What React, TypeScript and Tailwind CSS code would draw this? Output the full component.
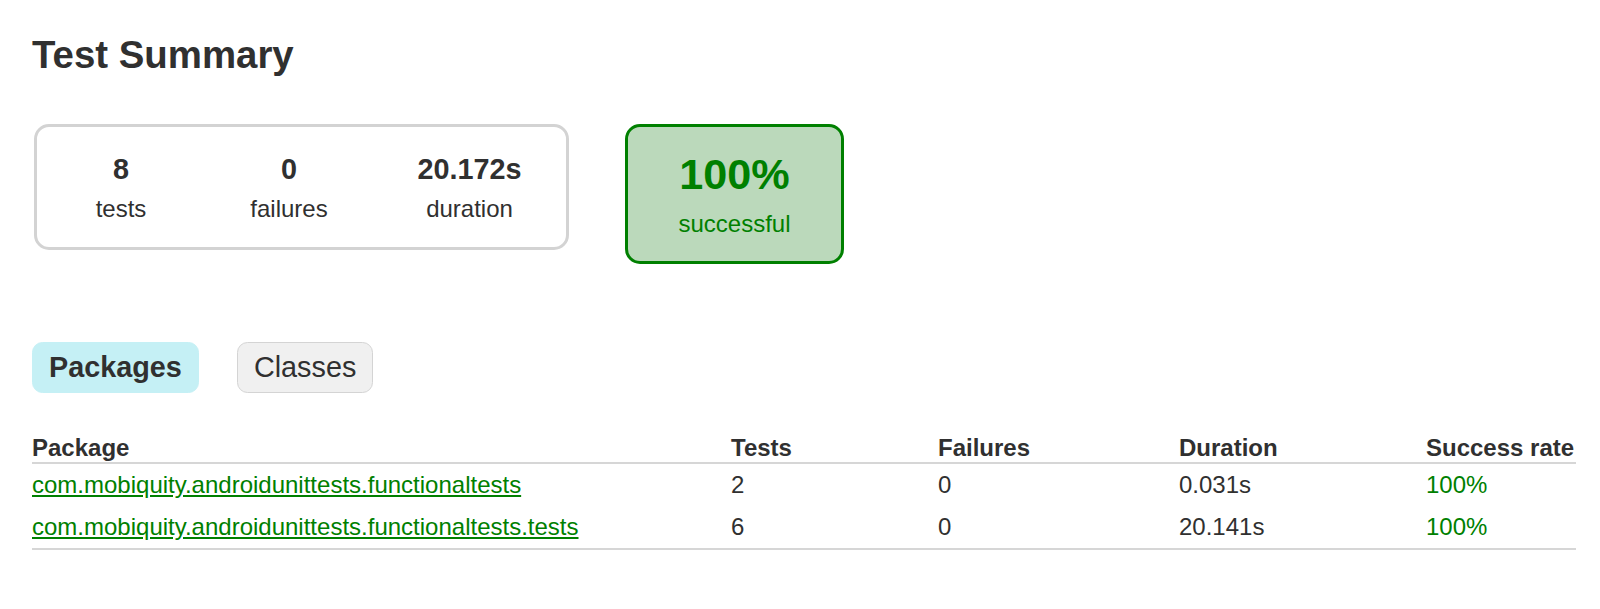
import React from "react";

const rows = [
  { name: "com.mobiquity.androidunittests.functionaltests", tests: "2", failures: "0", duration: "0.031s", rate: "100%" },
  { name: "com.mobiquity.androidunittests.functionaltests.tests", tests: "6", failures: "0", duration: "20.141s", rate: "100%" },
];

export default function App() {
  return (
    <div className="min-h-[609px] w-[1600px] bg-white pl-[32px] pt-[33px] text-[#303030] font-['Liberation_Sans',Arial,Helvetica,sans-serif]">
      <h1 className="m-0 text-[38.4px] leading-[44px] font-bold text-[#303030]">Test Summary</h1>

      <div className="mt-[47px] ml-[2px] flex items-start">
        <div className="flex rounded-[15px] border-[3px] border-[#d3d3d3]">
          <div className="w-[168px] pt-[26px] pb-[24px] text-center">
            <div className="mb-[10px] text-[28.8px] leading-[32px] font-bold">8</div>
            <div className="text-[24px] leading-[28px]">tests</div>
          </div>
          <div className="w-[168px] pt-[26px] pb-[24px] text-center">
            <div className="mb-[10px] text-[28.8px] leading-[32px] font-bold">0</div>
            <div className="text-[24px] leading-[28px]">failures</div>
          </div>
          <div className="w-[193px] pt-[26px] pb-[24px] text-center">
            <div className="mb-[10px] text-[28.8px] leading-[32px] font-bold">20.172s</div>
            <div className="text-[24px] leading-[28px]">duration</div>
          </div>
        </div>
        <div className="ml-[56px] w-[219px] rounded-[15px] border-[3px] border-[#008000] bg-[#bbd9bb] pt-[23px] pb-[23px] text-center text-[#008000]">
          <div className="mb-[12px] text-[43.2px] leading-[48px] font-bold">100%</div>
          <div className="text-[24px] leading-[28px]">successful</div>
        </div>
      </div>

      <div className="mt-[78px] flex gap-[38px]">
        <div className="rounded-[10.5px] border border-[#c5f0f5] bg-[#c5f0f5] px-[16px] py-[8px] text-[28.8px] leading-[33px] font-bold">
          Packages
        </div>
        <div className="rounded-[10.5px] border border-[#d4d4d4] bg-[#f0f0f0] px-[16px] py-[8px] text-[28.8px] leading-[33px]">
          Classes
        </div>
      </div>

      <div className="mt-[41px] w-[1544px] border-b-2 border-[#d6d6d6] text-[24px] leading-[28px]">
        <div className="grid grid-cols-[699px_207px_241px_247px_1fr] border-b-2 border-[#d6d6d6] font-bold whitespace-nowrap">
          <div>Package</div>
          <div>Tests</div>
          <div>Failures</div>
          <div>Duration</div>
          <div>Success rate</div>
        </div>
        {rows.map((r) => (
          <div key={r.name} className="grid grid-cols-[699px_207px_241px_247px_1fr] py-[7px] whitespace-nowrap">
            <div>
              <a href="#" className="text-[#008000] underline">{r.name}</a>
            </div>
            <div>{r.tests}</div>
            <div>{r.failures}</div>
            <div>{r.duration}</div>
            <div className="text-[#008000]">{r.rate}</div>
          </div>
        ))}
      </div>
    </div>
  );
}
